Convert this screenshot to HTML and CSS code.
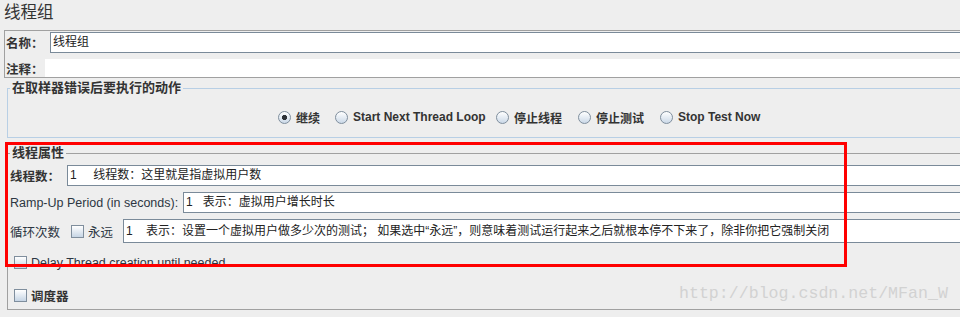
FILE: index.html
```html
<!DOCTYPE html>
<html lang="zh">
<head>
<meta charset="utf-8">
<title>线程组</title>
<link rel="stylesheet" href="styles.css">
</head>
<body>
<div class="page">
  <div class="title">线程组</div>
  <div class="namebox">
    <div class="name-row">
      <span class="lbl name-lbl">名称：</span>
      <div class="field">线程组</div>
    </div>
    <div class="comment-row">
      <span class="lbl comment-lbl">注释：</span>
      <div class="field plain"></div>
    </div>
  </div>

  <fieldset class="group blue">
    <legend>在取样器错误后要执行的动作</legend>
    <div class="radios">
      <label class="radio w1"><span class="rb on"></span>继续</label>
      <label class="radio w2"><span class="rb"></span>Start Next Thread Loop</label>
      <label class="radio w3"><span class="rb"></span>停止线程</label>
      <label class="radio w3"><span class="rb"></span>停止测试</label>
      <label class="radio"><span class="rb"></span>Stop Test Now</label>
    </div>
  </fieldset>

  <fieldset class="group etched">
    <legend>线程属性</legend>
    <div class="frow first">
      <span class="lbl threads-lbl">线程数：</span>
      <div class="field">1     线程数：这里就是指虚拟用户数</div>
    </div>
    <div class="frow">
      <span class="reg ramp-lbl">Ramp-Up Period (in seconds):</span>
      <div class="field">1   表示：虚拟用户增长时长</div>
    </div>
    <div class="frow tall">
      <span class="reg loop-lbl">循环次数</span>
      <span class="cb"></span>
      <span class="reg forever-lbl">永远</span>
      <div class="field">1    表示：设置一个虚拟用户做多少次的测试； 如果选中“永远”，则意味着测试运行起来之后就根本停不下来了，除非你把它强制关闭</div>
    </div>
    <div class="chk delay">
      <span class="cb"></span><span class="reg chk-text">Delay Thread creation until needed</span>
    </div>
    <div class="chk sched">
      <span class="cb"></span><span class="lbl chk-text">调度器</span>
    </div>
  </fieldset>

  <div class="redbox"></div>
  <div class="watermark">http://blog.csdn.net/MFan_W</div>
</div>
</body>
</html>
```

FILE: styles.css
```css
* { box-sizing: border-box; }

html, body {
  margin: 0;
  padding: 0;
  overflow: hidden;
  background: #eeeeee;
}

body {
  font-family: "Liberation Sans", "Noto Sans CJK SC", sans-serif;
  color: #333333;
}

.page {
  position: relative;
  width: 1000px;
  height: 317px;
}

.title {
  height: 30px;
  line-height: 24px;
  padding-left: 4px;
  font-size: 16.5px;
  color: #333333;
}

.namebox {
  margin-left: 4px;
  height: 48px;
  border: 1px solid #a0a0a0;
  border-right: 0;
}

.name-row {
  display: flex;
  align-items: center;
  height: 21px;
  margin-top: 1px;
}

.comment-row {
  display: flex;
  align-items: center;
  height: 18px;
  margin-top: 6px;
}

.lbl {
  font-size: 12.5px;
  font-weight: bold;
  color: #333333;
  white-space: nowrap;
  flex: none;
}

.reg {
  font-size: 12.5px;
  color: #2c3642;
  white-space: nowrap;
  flex: none;
}

.name-lbl { width: 45px; padding-left: 1px; }
.comment-lbl { width: 40px; padding-left: 1px; }

.field {
  flex: 1;
  height: 21px;
  border: 1px solid #7a8a99;
  background: #ffffff;
  padding-left: 2px;
  font-size: 12px;
  line-height: 19px;
  color: #222222;
  white-space: pre;
  overflow: hidden;
}

.field.plain {
  height: 18px;
  border: 0;
}

fieldset {
  margin: 0;
  padding: 0;
  min-width: 0;
  border: 1px solid #a0a0a0;
  border-right: 0;
}

legend {
  margin-left: 2px;
  padding: 0 2px;
  font-size: 13px;
  font-weight: bold;
  line-height: 18px;
  color: #333333;
}

.group.blue {
  margin: 1px 0 0 7px;
  border-color: #b8cfe5;
  padding-bottom: 8px;
}

.radios {
  display: flex;
  align-items: center;
  height: 24px;
  margin-top: 8px;
  padding-left: 270px;
}

.radio {
  display: flex;
  align-items: center;
  font-size: 12px;
  font-weight: bold;
  color: #333333;
  white-space: nowrap;
}

.radio.w1 { width: 57px; }
.radio.w2 { width: 161px; }
.radio.w3 { width: 82px; }

.rb {
  width: 13px;
  height: 13px;
  margin-right: 5px;
  border-radius: 50%;
  border: 1px solid #7f8e9d;
  background: linear-gradient(#ffffff, #cbd9e8);
  flex: none;
}

.rb.on {
  background:
    radial-gradient(circle, #2f3338 0, #2f3338 2.3px, transparent 2.9px),
    linear-gradient(#ffffff, #cbd9e8);
}

.cb {
  width: 13px;
  height: 13px;
  border: 1px solid #7f8e9d;
  background: linear-gradient(#ffffff, #c6d5e5);
  flex: none;
}

.group.etched {
  margin: 6px 0 0 7px;
  padding-bottom: 3px;
}

.frow {
  display: flex;
  align-items: center;
  height: 21px;
  margin-top: 6px;
  padding-left: 2px;
}

.frow.first { margin-top: 3px; }
.frow.tall { height: 24px; }
.frow.tall .field { height: 24px; line-height: 22px; }

.threads-lbl { width: 57px; }
.ramp-lbl { width: 173px; }
.loop-lbl { width: 61px; }
.frow .cb { margin-right: 4px; }
.forever-lbl { width: 35px; }

.chk {
  display: flex;
  align-items: center;
  height: 21px;
  padding-left: 6px;
}

.chk.delay { margin-top: 9px; }
.chk.sched { margin-top: 12px; }

.chk-text { margin-left: 4px; }

.redbox {
  position: absolute;
  left: 5px;
  top: 142px;
  width: 842px;
  height: 125px;
  border: 3px solid #ff0000;
}

.watermark {
  position: absolute;
  left: 679px;
  top: 284px;
  font-family: "Liberation Mono", monospace;
  font-size: 16.6px;
  line-height: 20px;
  color: #d2d2d2;
  white-space: nowrap;
}
```
